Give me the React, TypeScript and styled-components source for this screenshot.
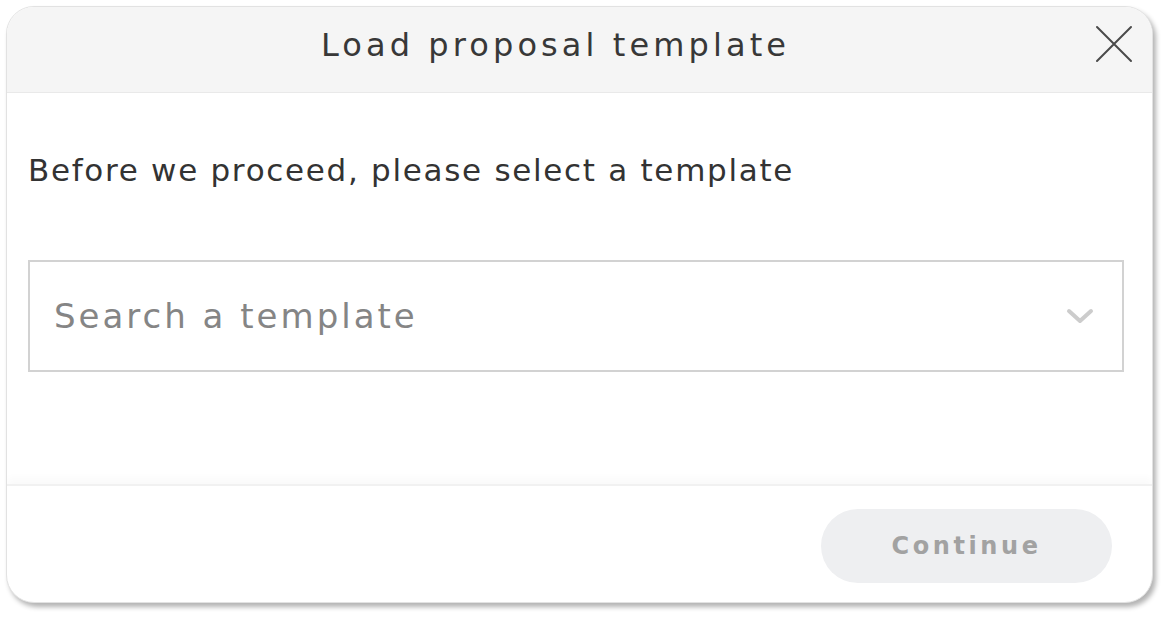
import styled, { createGlobalStyle } from "styled-components";

const GlobalStyle = createGlobalStyle`
  html, body {
    margin: 0;
    padding: 0;
    background: #ffffff;
  }
  body {
    font-family: "DejaVu Sans", "Open Sans", sans-serif;
  }
`;

export default function App() {
  return (
    <>
      <GlobalStyle />
      <Page>
        <Modal>
          <Header>
            <Title>Load proposal template</Title>
            <CloseButton aria-label="Close">
              <svg width="38" height="38" viewBox="0 0 38 38">
                <path
                  d="M2 2 L36 36 M36 2 L2 36"
                  stroke="#4a4a4a"
                  strokeWidth="2"
                  strokeLinecap="round"
                  fill="none"
                />
              </svg>
            </CloseButton>
          </Header>
          <Body>
            <Prompt>Before we proceed, please select a template</Prompt>
            <SelectBox>
              <Placeholder>Search a template</Placeholder>
              <svg width="28" height="18" viewBox="0 0 28 18">
                <path
                  d="M3 4 L14 14 L25 4"
                  stroke="#cccccc"
                  strokeWidth="4"
                  strokeLinecap="round"
                  strokeLinejoin="round"
                  fill="none"
                />
              </svg>
            </SelectBox>
          </Body>
          <Footer>
            <ContinueButton disabled>Continue</ContinueButton>
          </Footer>
        </Modal>
      </Page>
    </>
  );
}

const Page = styled.div`
  padding: 6px 0 0 6px;
  width: 1167px;
  height: 617px;
  box-sizing: border-box;
`;

const Modal = styled.div`
  width: 1147px;
  height: 597px;
  display: flex;
  flex-direction: column;
  background: #ffffff;
  border: 1px solid #e2e2e2;
  border-radius: 28px;
  box-sizing: border-box;
  overflow: hidden;
  box-shadow: 3px 4px 5px rgba(0, 0, 0, 0.3);
`;

const Header = styled.div`
  height: 86px;
  flex-shrink: 0;
  background: #f5f5f5;
  border-bottom: 1px solid #e9e9e9;
  display: flex;
  align-items: center;
  padding: 0 19px 0 9px;
  box-sizing: border-box;
`;

const Title = styled.h2`
  flex: 1;
  margin: 0;
  text-align: center;
  font-size: 32px;
  font-weight: 400;
  color: #383838;
  letter-spacing: 4.1px;
  padding-bottom: 10px;
`;

const CloseButton = styled.button`
  flex-shrink: 0;
  width: 38px;
  height: 38px;
  margin-bottom: 12px;
  padding: 0;
  border: none;
  background: none;
  cursor: pointer;
  display: flex;
`;

const Body = styled.div`
  flex: 1;
  padding: 57px 28px 0 21px;
  display: flex;
  flex-direction: column;
`;

const Prompt = styled.p`
  margin: 0;
  font-size: 31px;
  color: #333333;
  letter-spacing: 1.7px;
  line-height: 40px;
`;

const SelectBox = styled.div`
  margin-top: 70px;
  height: 112px;
  border: 2px solid #d2d2d2;
  box-sizing: border-box;
  display: flex;
  align-items: center;
  justify-content: space-between;
  padding: 0 28px 0 24px;
`;

const Placeholder = styled.span`
  font-size: 34px;
  color: #858585;
  letter-spacing: 3px;
`;

const Footer = styled.div`
  height: 118px;
  flex-shrink: 0;
  border-top: 2px solid #f1f1f1;
  box-shadow: 0 -6px 8px rgba(0, 0, 0, 0.025);
  display: flex;
  align-items: center;
  justify-content: flex-end;
  padding: 3px 40px 0 0;
  box-sizing: border-box;
`;

const ContinueButton = styled.button`
  width: 291px;
  height: 74px;
  border: none;
  border-radius: 37px;
  background: #eeeff1;
  color: #a2a2a2;
  font-family: "DejaVu Sans", "Open Sans", sans-serif;
  font-size: 24px;
  font-weight: 700;
  letter-spacing: 3.6px;
  cursor: default;
`;
